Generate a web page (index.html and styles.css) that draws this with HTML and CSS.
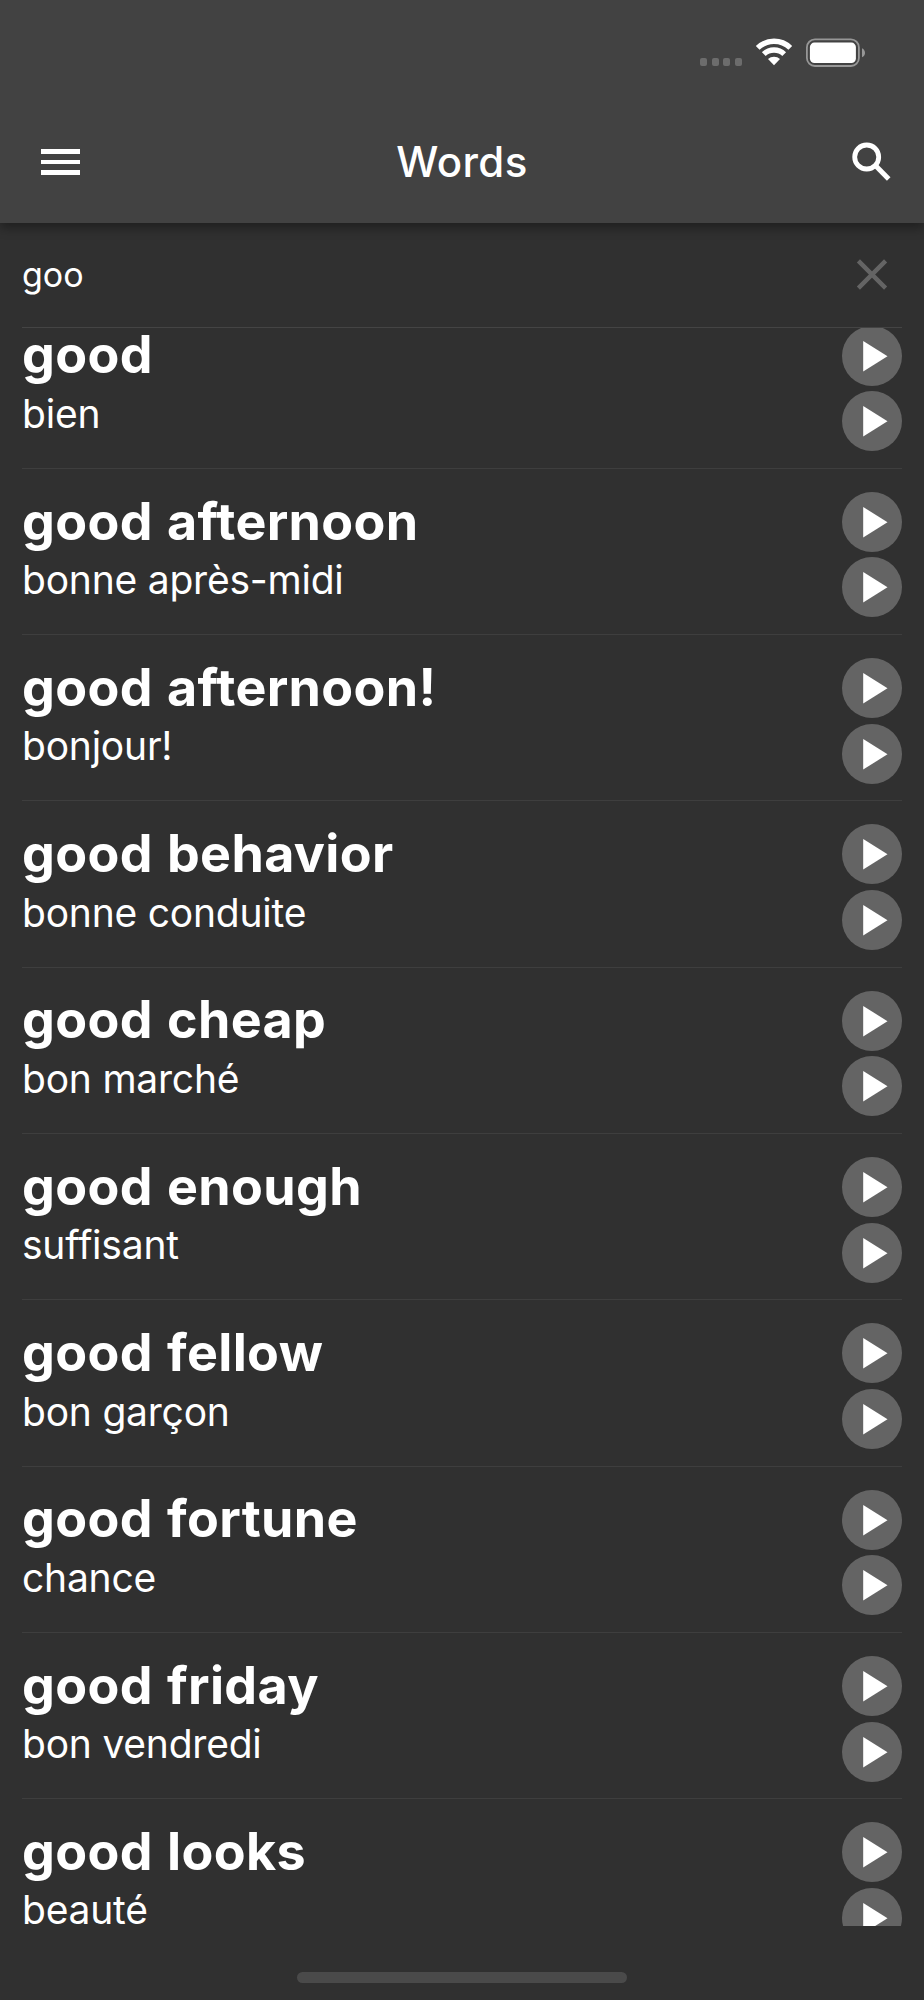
FILE: index.html
```html
<!DOCTYPE html>
<html lang="en">
<head>
    <meta charset="UTF-8">
    <meta name="viewport" content="width=device-width, initial-scale=1.0">
    <title>Words</title>
    <link rel="stylesheet" href="styles.css">
</head>
<body>
    <header class="header">
        <div class="status-bar">
            <div class="signal"><i></i><i></i><i></i><i></i></div>
            <svg class="wifi" width="38" height="28" viewBox="0 0 38 28">
                <g fill="none" stroke="#fff" stroke-width="5.4">
                    <path d="M2.7 9.9a23.4 23.4 0 0 1 32.6 0"/>
                    <path d="M8.8 16.1a14.8 14.8 0 0 1 20.4 0"/>
                </g>
                <path fill="#fff" d="M13 21.1a8.8 8.8 0 0 1 12 0l-6 6.2z"/>
            </svg>
            <svg class="battery" width="60" height="30" viewBox="0 0 60 30">
                <rect x="1.9" y="1.4" width="52" height="26.6" rx="8" fill="none" stroke="#979797" stroke-width="1.8"/>
                <rect x="4.9" y="4.6" width="46" height="20.4" rx="4.5" fill="#fff"/>
                <path fill="#979797" d="M57 10.2c4 1.6 4 7.6 0 9z"/>
            </svg>
        </div>
        <nav class="toolbar">
            <div class="menu"><i></i><i></i><i></i></div>
            <h1 class="toolbar-title">Words</h1>
            <svg class="search-icon" width="40" height="40" viewBox="0 0 40 40" fill="none" stroke="#fff">
                <circle cx="14.7" cy="15" r="12" stroke-width="4.8"/>
                <path stroke-width="5" d="M24.4 24.6l12.3 12.4"/>
            </svg>
        </nav>
    </header>

    <div class="search-row">
        <input class="search-input" type="text" value="goo">
        <svg class="clear-icon" width="32" height="32" viewBox="0 0 32 32" stroke="#646464" stroke-width="4.4">
            <path d="M2.4 1.9l27.2 27.2M29.6 1.9L2.4 29.1"/>
        </svg>
    </div>

    <main class="list">
        <div class="list-scroll" id="words"></div>
    </main>

    <footer class="bottom-bar">
        <div class="home-indicator"></div>
    </footer>

    <script>
        const words = [
            ["good", "bien"],
            ["good afternoon", "bonne après-midi"],
            ["good afternoon!", "bonjour!"],
            ["good behavior", "bonne conduite"],
            ["good cheap", "bon marché"],
            ["good enough", "suffisant"],
            ["good fellow", "bon garçon"],
            ["good fortune", "chance"],
            ["good friday", "bon vendredi"],
            ["good looks", "beauté"]
        ];

        const playButton = `
            <svg class="play" viewBox="0 0 60 60">
                <circle cx="30" cy="30" r="30" fill="#646464"/>
                <path d="M21.2 15v30.6L45.5 30.2z" fill="#fff"/>
            </svg>`;

        document.getElementById("words").innerHTML = words.map(([word, translation]) => `
            <div class="row">
                <div class="row-text">
                    <div class="word">${word}</div>
                    <div class="translation">${translation}</div>
                </div>
                <div class="row-buttons">${playButton}${playButton}</div>
            </div>`).join("");
    </script>
</body>
</html>
```

FILE: styles.css
```css
* {
    box-sizing: border-box;
}
body {
    margin: 0;
    height: 2000px;
    display: flex;
    flex-direction: column;
    overflow: hidden;
    background-color: #303030;
    color: #fff;
    font-family: Inter, "Liberation Sans", sans-serif;
}

/* header */
.header {
    height: 222.6px;
    flex: none;
    background-color: #424242;
    box-shadow: 0 5px 10px rgba(0, 0, 0, 0.35);
}
.status-bar {
    display: flex;
    justify-content: flex-end;
    height: 100px;
    padding: 38px 59px 0 0;
}
.signal {
    display: flex;
    gap: 4.6px;
    margin-right: 13px;
}
.signal i {
    width: 7px;
    height: 8px;
    margin-top: 20px;
    border-radius: 2px;
    background-color: #6c6c6c;
}
.wifi {
    margin-right: 12px;
}
.toolbar {
    display: grid;
    grid-template-columns: 1fr auto 1fr;
    align-items: center;
    height: 123px;
    padding: 0 32px 0 41px;
}
.menu {
    display: flex;
    flex-direction: column;
    gap: 6px;
    padding-top: 1px;
}
.menu i {
    width: 39px;
    height: 4.7px;
    background-color: #fff;
}
.toolbar-title {
    margin: 0 0 0 -9px;
    font-size: 42px;
    font-weight: 500;
    line-height: 50px;
    letter-spacing: 0.4px;
}
.search-icon {
    justify-self: end;
}

/* search */
.search-row {
    display: flex;
    align-items: center;
    flex: none;
    height: 105.4px;
    margin: 0 22px;
    padding-right: 14px;
    border-bottom: 1px solid #444;
}
.search-input {
    flex: 1;
    padding: 0;
    border: none;
    outline: none;
    background: none;
    color: #fff;
    font-family: inherit;
    font-size: 34px;
}

/* words list */
.list {
    flex: none;
    height: 1598px;
    padding: 0 22px;
    overflow: hidden;
}
.list-scroll {
    margin-top: -25.4px;
}
.row {
    display: flex;
    justify-content: space-between;
    height: 166.3px;
    padding-top: 23px;
    border-bottom: 1px solid #3e3e3e;
}
.row-text {
    margin-top: -1.4px;
}
.word {
    font-size: 52px;
    font-weight: 700;
    line-height: 62px;
    letter-spacing: 0.35px;
    word-spacing: 1.5px;
}
.translation {
    margin-top: 3.6px;
    font-size: 39px;
    line-height: 47px;
    letter-spacing: -0.22px;
}
.row-buttons {
    display: flex;
    flex-direction: column;
    gap: 5.6px;
}
.play {
    display: block;
    width: 60px;
    height: 60px;
}

.bottom-bar {
    flex: 1;
    display: flex;
    justify-content: center;
    padding-top: 46px;
}
.home-indicator {
    width: 330px;
    height: 11px;
    border-radius: 6px;
    background-color: #4a4a4a;
}
```
